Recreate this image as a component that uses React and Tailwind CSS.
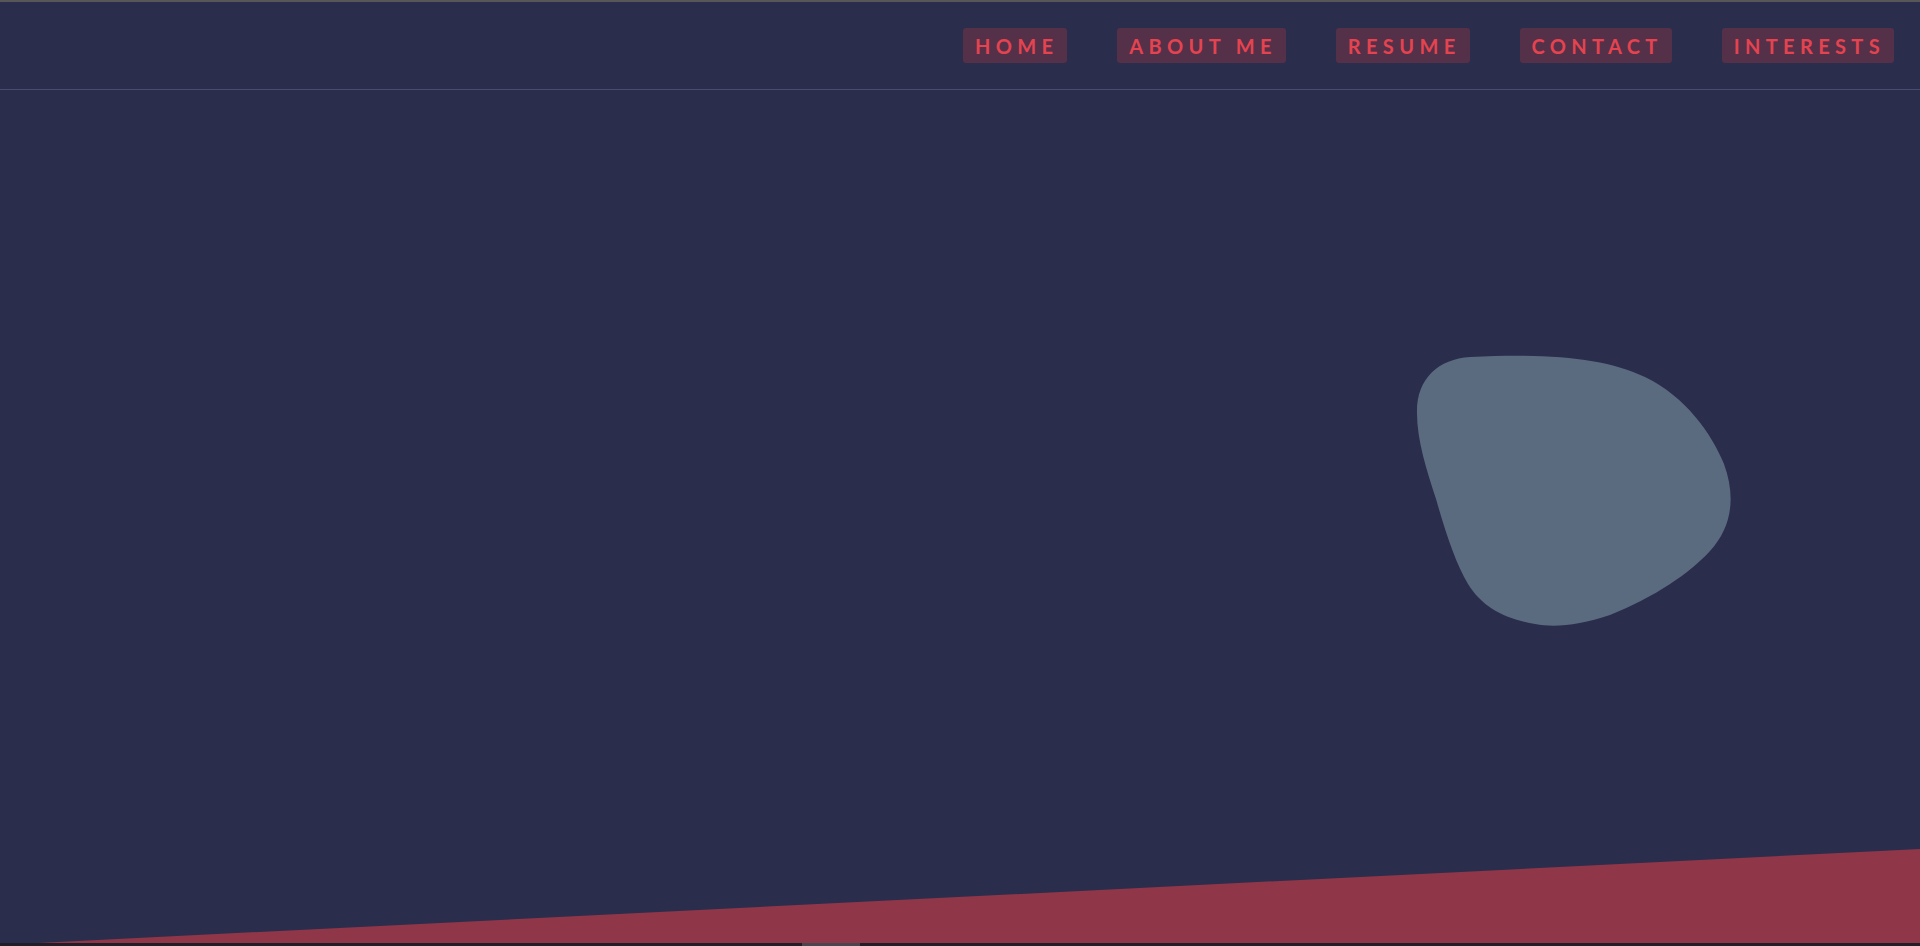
import React from 'react';

const links = ['HOME', 'ABOUT ME', 'RESUME', 'CONTACT', 'INTERESTS'];

export default function App() {
  return (
    <div className="h-[946px] w-full overflow-hidden bg-[#2a2d4b] flex flex-col font-['Lato',sans-serif]">
      <div className="h-[2px] bg-[#575757]" />
      <header className="h-[88px] flex items-center justify-end gap-[50px] pr-[26px] border-b border-[#4a4a72]">
        {links.map((l) => (
          <a
            key={l}
            href="#"
            className="h-[35px] flex items-center pl-3 pr-[9px] rounded-[3px] bg-[#543049] text-[#e4434f] text-[20px] font-bold tracking-[5.35px] leading-none"
          >
            {l}
          </a>
        ))}
      </header>

      <main className="relative flex-1">
        {/* blob */}
        <svg
          className="absolute left-[1400px] top-[249px]"
          width="360"
          height="300"
          viewBox="0 0 360 300"
        >
          <path
            d="M 70 18 C 150 14, 205 19, 245 38 C 285 57, 312 95, 324 125 C 336 158, 332 188, 310 212 C 290 234, 255 258, 210 276 C 180 286, 155 289, 135 285 C 105 280, 82 268, 68 245 C 56 225, 46 195, 36 160 C 26 130, 17 100, 17 75 C 16 40, 38 20, 70 18 Z"
            fill="#5a6a7f"
          />
        </svg>

        {/* slanted bottom band */}
        <svg
          className="absolute left-0 bottom-0"
          width="1920"
          height="97"
          viewBox="0 0 1920 97"
        >
          <polygon points="38,97 1920,3 1920,97" fill="#8f3649" />
        </svg>
      </main>

      <div className="h-[3px] bg-[#221e27] relative">
        <div className="absolute left-[802px] top-0 h-[3px] w-[58px] bg-[#4a4650]" />
      </div>
    </div>
  );
}
